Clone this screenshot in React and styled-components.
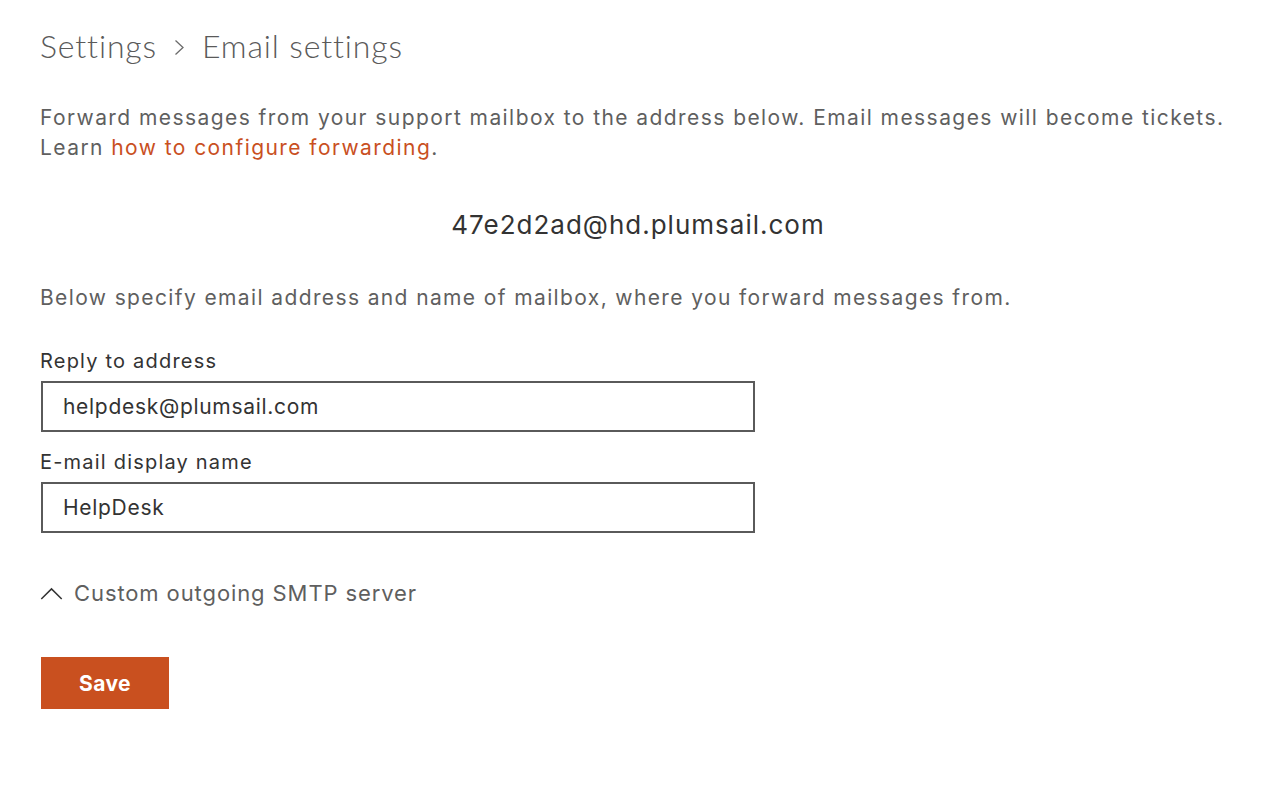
import React from "react";
import styled, { createGlobalStyle } from "styled-components";

const GlobalStyle = createGlobalStyle`
  body {
    margin: 0;
    background: #ffffff;
    font-family: Inter, "Liberation Sans", Arial, sans-serif;
  }
`;

const App = () => {
  return (
    <>
      <GlobalStyle />
      <Page>
        <Breadcrumb>
          <span>Settings</span>
          <Separator viewBox="0 0 11 17" aria-hidden="true">
            <path d="M1.5 1.5 L9 8.5 L1.5 15.5" />
          </Separator>
          <span>Email settings</span>
        </Breadcrumb>

        <Intro>
          Forward messages from your support mailbox to the address below. Email messages will become tickets.
          <br />
          Learn <Link href="#">how to configure forwarding</Link>.
        </Intro>

        <Address>47e2d2ad@hd.plumsail.com</Address>

        <Hint>Below specify email address and name of mailbox, where you forward messages from.</Hint>

        <Field>
          <Label>Reply to address</Label>
          <Input defaultValue="helpdesk@plumsail.com" />
        </Field>
        <Field>
          <Label>E-mail display name</Label>
          <Input defaultValue="HelpDesk" />
        </Field>

        <Toggle>
          <Chevron viewBox="0 0 24 14" aria-hidden="true">
            <path d="M1 13 L12 2 L23 13" />
          </Chevron>
          Custom outgoing SMTP server
        </Toggle>

        <SaveButton>Save</SaveButton>
      </Page>
    </>
  );
};

export default App;

const Page = styled.div`
  padding: 26px 40px 40px;
  color: #5f5f5f;
`;

const Breadcrumb = styled.h1`
  display: flex;
  align-items: center;
  gap: 17px;
  margin: 0;
  font-family: Lato, Inter, "Liberation Sans", sans-serif;
  font-size: 32px;
  font-weight: 300;
  color: #5a5a5a;
  line-height: 40px;
  letter-spacing: 0.85px;
`;

const Separator = styled.svg`
  width: 11px;
  height: 17px;
  margin-top: 2px;
  fill: none;
  stroke: #6b6b6b;
  stroke-width: 1.3;
`;

const Intro = styled.p`
  margin: 37px 0 0;
  font-size: 21px;
  line-height: 30px;
  letter-spacing: 1.43px;
  color: #5f5f5f;
`;

const Link = styled.a`
  color: #c9501f;
  text-decoration: none;
`;

const Address = styled.div`
  margin-top: 46px;
  text-align: center;
  font-size: 26px;
  line-height: 32px;
  letter-spacing: 1px;
  color: #333333;
`;

const Hint = styled.p`
  margin: 42px 0 0;
  font-size: 21px;
  line-height: 30px;
  letter-spacing: 1.38px;
  color: #5f5f5f;
`;

const Field = styled.div`
  display: flex;
  flex-direction: column;
  margin-top: 34px;
  & + & {
    margin-top: 16px;
  }
`;

const Label = styled.label`
  font-size: 20px;
  line-height: 28px;
  letter-spacing: 1.2px;
  color: #333333;
  margin-bottom: 6px;
`;

const Input = styled.input`
  box-sizing: border-box;
  width: 714px;
  height: 51px;
  margin-left: 1px;
  padding: 0 20px;
  border: 2px solid #5a5a5a;
  border-radius: 0;
  font-family: inherit;
  font-size: 21px;
  letter-spacing: 0.7px;
  color: #333333;
  background: #ffffff;
  outline: none;
`;

const Toggle = styled.div`
  display: flex;
  align-items: center;
  gap: 11px;
  margin-top: 45px;
  font-size: 22px;
  line-height: 30px;
  letter-spacing: 0.9px;
  color: #5f5f5f;
  cursor: pointer;
`;

const Chevron = styled.svg`
  width: 23px;
  height: 13px;
  fill: none;
  stroke: #333333;
  stroke-width: 1.6;
`;

const SaveButton = styled.button`
  display: block;
  margin-top: 49px;
  margin-left: 1px;
  width: 128px;
  height: 52px;
  border: none;
  background: #c9501f;
  color: #ffffff;
  font-family: inherit;
  font-size: 21px;
  font-weight: 700;
  letter-spacing: 0.4px;
  cursor: pointer;
`;
